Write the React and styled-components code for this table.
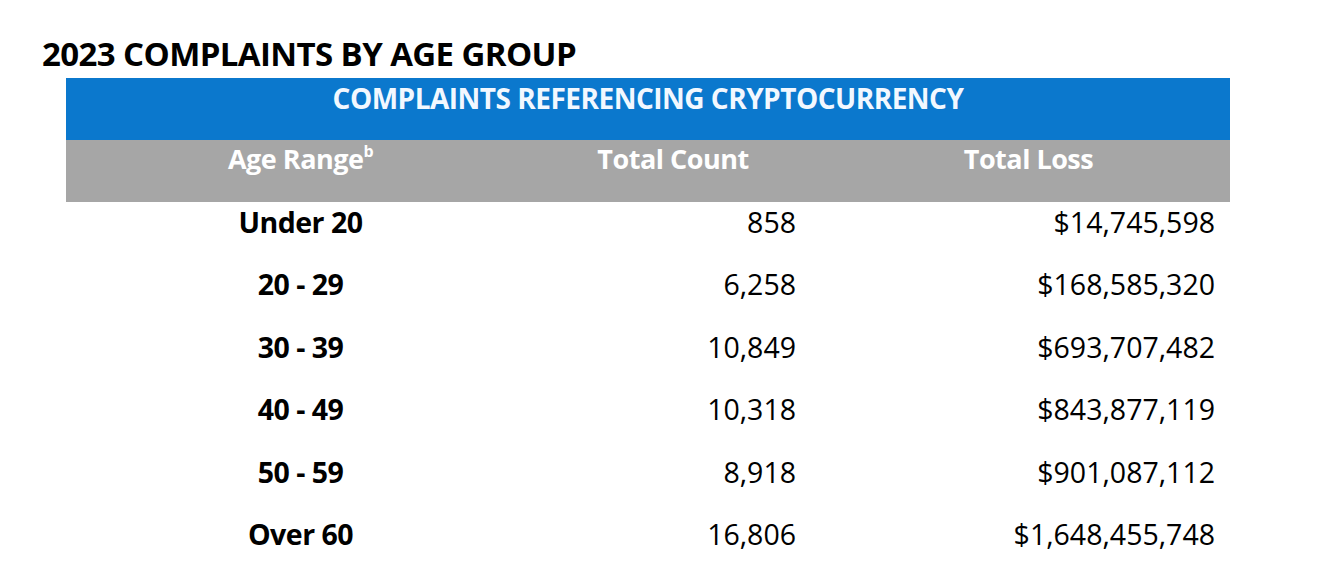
import React from 'react'
import styled, { createGlobalStyle } from 'styled-components'

const GlobalStyle = createGlobalStyle`
  body {
    margin: 0;
    background: #fff;
    font-family: "Open Sans", "Liberation Sans", sans-serif;
  }
`

const rows = [
    { age: 'Under 20', count: '858', loss: '$14,745,598' },
    { age: '20 - 29', count: '6,258', loss: '$168,585,320' },
    { age: '30 - 39', count: '10,849', loss: '$693,707,482' },
    { age: '40 - 49', count: '10,318', loss: '$843,877,119' },
    { age: '50 - 59', count: '8,918', loss: '$901,087,112' },
    { age: 'Over 60', count: '16,806', loss: '$1,648,455,748' },
]

const Page = styled.div`
    width: 1320px;
    height: 586px;
    padding: 33px 0 0 42px;
    box-sizing: border-box;
    overflow: hidden;
`

const Title = styled.h1`
    margin: 0;
    font-size: 33px;
    font-weight: 700;
    line-height: 42px;
    color: #000;
    letter-spacing: -0.6px;
`

const Table = styled.div`
    width: 1164px;
    margin: 3px 0 0 24px;
`

const Banner = styled.div`
    height: 62px;
    background: #0b78cd;
    color: #f2f8ff;
    font-size: 28px;
    font-weight: 700;
    text-align: center;
    line-height: 40px;
    letter-spacing: -0.5px;
`

const Grid = styled.div`
    display: grid;
    grid-template-columns: 469px 276px 1fr;
    height: ${p => p.$h};
    background: ${p => p.$bg || 'transparent'};
    color: ${p => p.$color || '#000'};
    font-size: ${p => p.$size};
    line-height: 38px;
    padding-top: ${p => p.$top};
    box-sizing: border-box;
`

const Cell = styled.div`
    text-align: ${p => p.$align || 'center'};
    font-weight: ${p => (p.$bold ? 700 : 400)};
    padding-right: ${p => p.$pr || 0};
    padding-left: ${p => p.$pl || 0};
    letter-spacing: ${p => (p.$bold ? '-0.5px' : '0')};
    white-space: nowrap;
`

const Sup = styled.sup`
    font-size: 16px;
    line-height: 0;
    position: relative;
    top: -2px;
`

export default function App() {
    return (
        <Page>
            <GlobalStyle />
            <Title>2023 COMPLAINTS BY AGE GROUP</Title>
            <Table>
                <Banner>COMPLAINTS REFERENCING CRYPTOCURRENCY</Banner>
                <Grid $h="62px" $bg="#a6a6a6" $color="#fff" $size="27px" $top="0px">
                    <Cell $bold>Age Range<Sup>b</Sup></Cell>
                    <Cell $bold>Total Count</Cell>
                    <Cell $bold $pl="16px">Total Loss</Cell>
                </Grid>
                {rows.map(r => (
                    <Grid key={r.age} $h="62.4px" $size="28.5px" $top="1px">
                        <Cell $bold>{r.age}</Cell>
                        <Cell $align="right" $pr="15px">{r.count}</Cell>
                        <Cell $align="right" $pr="15px">{r.loss}</Cell>
                    </Grid>
                ))}
            </Table>
        </Page>
    )
}
